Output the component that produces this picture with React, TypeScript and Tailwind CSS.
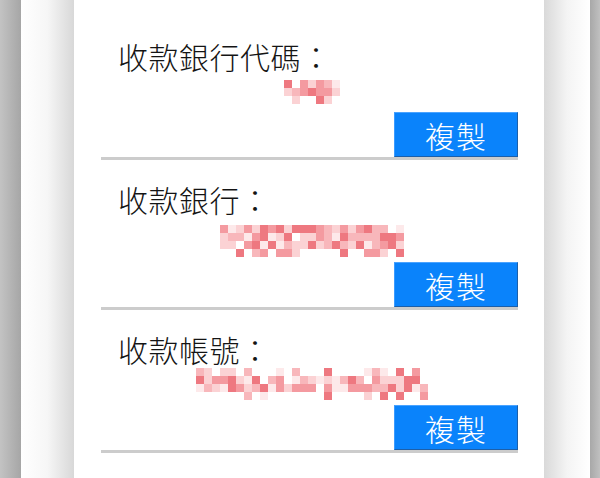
const SHADES = ['', '#fde9ea', '#fbd2d4', '#f8b7bb', '#f49aa0', '#ee7880']

// deterministic noise so the censored mosaic looks the same every render
const noise = (seed: number, i: number, j: number) => {
  const x = Math.sin(seed * 91.7 + i * 12.9898 + j * 78.233) * 43758.5453
  return x - Math.floor(x)
}

type MosaicProps = {
  cols: number
  rows: number
  seed: number
  sparseRows?: number[]
}

// Mosaic mask over the hidden value
const Mosaic = ({ cols, rows, seed, sparseRows = [] }: MosaicProps) => {
  const b = 8
  const cells: JSX.Element[] = []
  for (let r = 0; r < rows; r++) {
    for (let c = 0; c < cols; c++) {
      const n = noise(seed, r, c)
      const sparse = sparseRows.includes(r)
      if (sparse && n < 0.55) continue
      if (!sparse && n < 0.06) continue
      const shade = 1 + Math.floor(noise(seed + 3, c, r) * 5)
      cells.push(
        <rect key={`${r}-${c}`} x={c * b} y={r * b} width={b} height={b} fill={SHADES[shade]} />
      )
    }
  }
  return (
    <svg width={cols * b} height={rows * b} viewBox={`0 0 ${cols * b} ${rows * b}`} shapeRendering="crispEdges">
      {cells}
    </svg>
  )
}

type RowProps = {
  label: string
  cols: number
  rows: number
  seed: number
  sparseRows?: number[]
  valueClass: string
  buttonClass: string
  topClass: string
}

const InfoRow = ({ label, cols, rows, seed, sparseRows, valueClass, buttonClass, topClass }: RowProps) => (
  <div className={`flex flex-col ${topClass}`}>
    <div className="pl-[17px] text-[30px] leading-[36px] font-light text-[#141414] tracking-[0.5px]">{label}</div>
    <div className={`flex justify-center pl-[4px] ${valueClass}`}>
      <Mosaic cols={cols} rows={rows} seed={seed} sparseRows={sparseRows} />
    </div>
    <div className={`flex justify-end ${buttonClass}`}>
      <button className="w-[124px] h-[45px] bg-[#0a83fb] border border-t-[#4aa3ff] border-l-[#3b9bff] border-r-[#1d5fa8] border-b-[#1d5fa8] text-white text-[30px] font-light leading-none tracking-[1px]">
        複製
      </button>
    </div>
    <div className="h-[3px] bg-[#cccccc]" />
  </div>
)

export default function App() {
  return (
    <div
      className="w-[600px] h-[478px] overflow-hidden flex"
      style={{ fontFamily: '"Noto Sans CJK TC", "Noto Sans CJK SC", sans-serif' }}
    >
      {/* bordes grises de la página */}
      <div className="w-[21px] h-full bg-gradient-to-r from-[#c3c3c3] to-[#a6a6a6]" />
      <div className="w-[53px] h-full bg-gradient-to-r from-white via-[#f6f6f6] to-[#d8d8d8]" />

      {/* tarjeta blanca */}
      <div className="w-[470px] h-full bg-white pl-[27px] pr-[26px]">
        <InfoRow
          label="收款銀行代碼："
          cols={7}
          rows={3}
          seed={2}
          sparseRows={[2]}
          topClass="pt-[38px]"
          valueClass="mt-[6px] h-[25px]"
          buttonClass="mt-[7px]"
        />
        <InfoRow
          label="收款銀行："
          cols={23}
          rows={4}
          seed={7}
          sparseRows={[3]}
          topClass="pt-[21px]"
          valueClass="mt-[8px] h-[32px]"
          buttonClass="mt-[5px]"
        />
        <InfoRow
          label="收款帳號："
          cols={29}
          rows={4}
          seed={11}
          sparseRows={[0, 3]}
          topClass="pt-[21px]"
          valueClass="mt-[1px] h-[32px] items-end"
          buttonClass="mt-[5px]"
        />
        <div className="pt-[22px] pl-[17px] text-[30px] leading-[36px] font-light text-[#141414]">收款戶名：</div>
      </div>

      <div className="w-[46px] h-full bg-gradient-to-r from-[#d9d9d9] via-[#f4f4f4] to-white" />
      <div className="w-[10px] h-full bg-gradient-to-r from-[#a8a8a8] to-[#c0c0c0]" />
    </div>
  )
}
